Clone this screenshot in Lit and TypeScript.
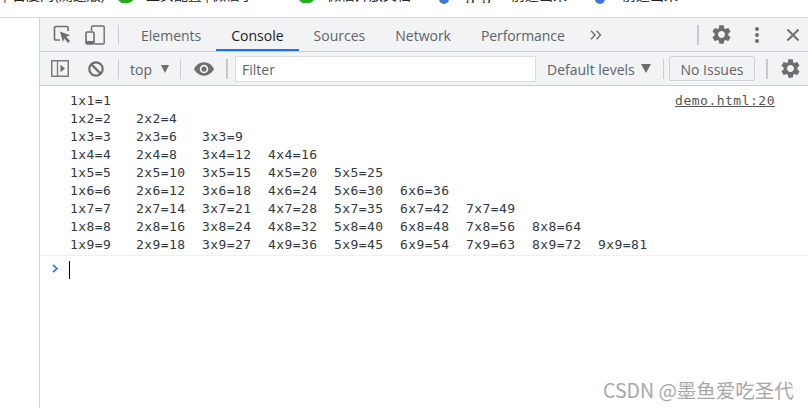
import { LitElement, html, css } from "lit";
import { customElement } from "lit/decorators.js";

const GEAR = "M19.14 12.94c.04-.3.06-.61.06-.94 0-.32-.02-.64-.07-.94l2.03-1.58c.18-.14.23-.41.12-.61l-1.92-3.32c-.12-.22-.37-.29-.59-.22l-2.39.96c-.5-.38-1.03-.7-1.62-.94l-.36-2.54c-.04-.24-.24-.41-.48-.41h-3.84c-.24 0-.43.17-.47.41l-.36 2.54c-.59.24-1.13.57-1.62.94l-2.39-.96c-.22-.08-.47 0-.59.22L2.74 8.87c-.12.21-.08.47.12.61l2.03 1.58c-.05.3-.09.63-.09.94s.02.64.07.94l-2.03 1.58c-.18.14-.23.41-.12.61l1.92 3.32c.12.22.37.29.59.22l2.39-.96c.5.38 1.03.7 1.62.94l.36 2.54c.05.24.24.41.48.41h3.84c.24 0 .44-.17.47-.41l.36-2.54c.59-.24 1.13-.56 1.62-.94l2.39.96c.22.08.47 0 .59-.22l1.92-3.32c.12-.22.07-.47-.12-.61l-2.01-1.58zM12 15.6c-1.98 0-3.6-1.62-3.6-3.6s1.62-3.6 3.6-3.6 3.6 1.62 3.6 3.6-1.62 3.6-3.6 3.6z";

const rows: string[] = [];
for (let j = 1; j <= 9; j++) {
  let r = "";
  for (let i = 1; i <= j; i++) r += `${i}x${j}=${i * j}\t`;
  rows.push(r);
}

const wechat = () => html`<svg class="bm-icon wx" width="15" height="5" viewBox="0 0 15 5"><path fill="#1fae1c" d="M0 -4H15V0.2C13.2 2.2 10.5 3.4 7 3.3C5.5 3.3 4.5 3.2 3.8 3.1L2.5 3.6L3 2C1.6 1.5 0.6 0.9 0 0Z"></path></svg>`;
const globe = () => html`<svg class="bm-icon gl" width="10" height="5" viewBox="0 0 10 5"><circle cx="5" cy="-1" r="5" fill="#3b78d8"></circle></svg>`;

@customElement("app-root")
export class AppRoot extends LitElement {
  static styles = css`
    :host { display: block; width: 808px; height: 408px; overflow: hidden; background: #fff; position: relative; font-family: "Open Sans", "Noto Sans", sans-serif; }
    .page { display: flex; flex-direction: column; height: 408px; }
    .strip { height: 17px; flex: none; overflow: hidden; border-bottom: 1px solid #d8dadc; box-sizing: content-box; }
    .bm { display: flex; align-items: flex-start; height: 6px; font-family: "Noto Sans CJK SC", sans-serif; font-size: 14px; line-height: 18px; color: #222; white-space: nowrap; }
    .bm span { display: block; flex: none; overflow: hidden; height: 18px; margin-top: -15px; }
    .bm-icon { flex: none; }
    .b0 { margin-left: 3px; width: 9px; }
    .b1 { width: 106px; }
    .wx { margin-right: 13px; }
    .gl { margin-right: 17px; }
    .b2 { width: 153px; }
    .b3 { width: 112px; }
    .b4 { width: 45px; }
    .b5 { width: 84px; }
    .b6 { width: 60px; }
    .main { flex: 1; display: flex; min-height: 0; }
    .gutter { width: 39px; flex: none; }
    .dev { flex: 1; min-width: 0; border-left: 1px solid #cfd1d3; display: flex; flex-direction: column; }
    .bar { height: 33px; flex: none; background: #f1f3f4; border-bottom: 1px solid #cacdd1; display: flex; align-items: center; color: #5f6368; }
    .sep { width: 1px; height: 20px; background: #ccced1; flex: none; }
    .sep.wide { width: 2px; background: #c6c8cb; }
    .tabs { display: flex; align-self: stretch; margin-left: 7px; }
    .tab { display: flex; align-items: center; padding: 1px 15px 0; font-size: 14px; box-sizing: border-box; height: 33px; }
    .tab.active { color: #202124; position: relative; }
    .tab.active::after { content: ""; position: absolute; left: 0; right: 0; bottom: 0; height: 2px; background: #1a73e8; }
    .tab.long { letter-spacing: -0.1px; }
    svg { display: block; flex: none; }
    .inspect { margin-left: 13px; }
    .device { margin-left: 14px; margin-right: 13px; }
    .more { margin-left: 10px; }
    .sp { flex: 1; }
    .top-gear { margin-left: 11px; }
    .kebab { margin-left: 22px; }
    .close { margin-left: 28px; margin-right: 9px; }
    .side { margin-left: 11px; }
    .block { margin-left: 19px; margin-right: 14px; }
    .ctx { margin-left: 11px; font-size: 14px; width: 24px; padding-top: 1px; }
    .arrow { margin-left: 7px; }
    .s2 { margin-left: 11px; }
    .eye { margin-left: 13px; }
    .s3 { margin-left: 12px; }
    .filter { margin-left: 7px; width: 301px; height: 26px; box-sizing: border-box; background: #fff; border: 1px solid #dcdee0; font-size: 14px; line-height: 25px; padding-left: 6px; color: #5f6368; flex: none; }
    .levels { margin-left: 11px; font-size: 14px; width: 88px; white-space: nowrap; padding-top: 1px; }
    .l-arrow { margin-left: 6px; }
    .s4 { margin-left: 12px; }
    .issues { margin-left: 5px; width: 86px; height: 25px; box-sizing: border-box; border: 1px solid #d0d2d5; border-radius: 2px; font-size: 14px; display: flex; align-items: center; justify-content: center; padding-top: 1px; }
    .s5 { margin-left: 11px; }
    .t-gear { margin-left: 11px; }
    .console { flex: 1; font-family: "DejaVu Sans Mono", monospace; font-size: 13px; color: #303942; position: relative; min-height: 0; padding-top: 6px; }
    .msgs { padding: 0 33px 0 30px; border-bottom: 1px solid #f0f0f0; height: 163px; position: relative; }
    .row { height: 18px; line-height: 18px; white-space: pre; tab-size: 8; letter-spacing: 0.424px; }
    .link { position: absolute; right: 33px; top: 0; line-height: 18px; color: #555; text-decoration: underline; letter-spacing: 0.5px; }
    .prompt { display: flex; align-items: flex-start; padding: 5px 0 0 12px; }
    .chev { margin-top: 3px; }
    .caret { margin-left: 10px; width: 1px; height: 18px; background: #000; }
    .mark { position: absolute; left: 603px; top: 378px; font-family: "Noto Sans CJK SC", sans-serif; font-size: 19.5px; line-height: 24px; color: #a8a8a8; white-space: nowrap; }
  `;

  render() {
    return html`
      <div class="page">
        <div class="strip">
          <div class="bm">
            <span class="b0">|</span><span class="b1">百度网(测速版)</span>
            ${wechat()}<span class="b2">主页配置 | 微信小...</span>
            ${wechat()}<span class="b3">微信开放文档</span>
            ${globe()}<span class="b4">gogs</span>
            <span class="b5">前途出来</span>
            ${globe()}<span class="b6">前途出来</span>
          </div>
        </div>
        <div class="main">
          <div class="gutter"></div>
          <div class="dev">
            <div class="bar">
              <svg class="inspect" width="18" height="19" viewBox="0 0 18 19" fill="none">
                <path d="M7 15H2.6A1.1 1.1 0 0 1 1.5 13.9V2.6A1.1 1.1 0 0 1 2.6 1.5H13.9A1.1 1.1 0 0 1 15 2.6V6" stroke="#6e6e6e" stroke-width="1.6"></path>
                <path d="M7 6.5L17 10.2L13.2 11.8L17 16L15 18L11.3 13.6L9.8 17Z" fill="#6e6e6e"></path>
              </svg>
              <svg class="device" width="20" height="20" viewBox="0 0 20 20" fill="none">
                <path d="M6.5 6V2.2A1.2 1.2 0 0 1 7.7 1H18A1.2 1.2 0 0 1 19.2 2.2V17.8A1.2 1.2 0 0 1 18 19H9.5" stroke="#6e6e6e" stroke-width="1.4"></path>
                <rect x="1" y="7" width="8" height="12" rx="1.2" stroke="#6e6e6e" stroke-width="1.6"></rect>
                <rect x="1" y="16" width="8" height="3" fill="#6e6e6e"></rect>
              </svg>
              <div class="sep"></div>
              <div class="tabs">
                <div class="tab">Elements</div>
                <div class="tab active">Console</div>
                <div class="tab">Sources</div>
                <div class="tab">Network</div>
                <div class="tab long">Performance</div>
              </div>
              <svg class="more" width="12" height="10" viewBox="0 0 12 10" fill="none" stroke="#6e6e6e" stroke-width="1.4"><path d="M1 0.8L5 5L1 9.2M6.5 0.8L10.5 5L6.5 9.2"></path></svg>
              <div class="sp"></div>
              <div class="sep wide"></div>
              <svg class="top-gear" width="23" height="23" viewBox="0 0 24 24"><path fill="#6e6e6e" d=${GEAR}></path></svg>
              <svg class="kebab" width="4" height="16" viewBox="0 0 4 16" fill="#6e6e6e"><circle cx="2" cy="2" r="2"></circle><circle cx="2" cy="8" r="2"></circle><circle cx="2" cy="14" r="2"></circle></svg>
              <svg class="close" width="12" height="12" viewBox="0 0 12 12" stroke="#6e6e6e" stroke-width="2"><path d="M0.5 0.5L11.5 11.5M11.5 0.5L0.5 11.5"></path></svg>
            </div>
            <div class="bar">
              <svg class="side" width="18" height="17" viewBox="0 0 18 17" fill="none">
                <rect x="0.75" y="0.75" width="16.5" height="15.5" stroke="#7a7a7a" stroke-width="1.5"></rect>
                <path d="M6.5 1V16" stroke="#7a7a7a" stroke-width="1.3"></path>
                <path d="M9.5 4.8L14 8.5L9.5 12.2Z" fill="#6e6e6e"></path>
              </svg>
              <svg class="block" width="16" height="16" viewBox="0 0 16 16" fill="none" stroke="#6e6e6e" stroke-width="2.2"><circle cx="8" cy="8" r="6.7"></circle><path d="M3.4 3.4L12.6 12.6"></path></svg>
              <div class="sep"></div>
              <div class="ctx">top</div>
              <svg class="arrow" width="8" height="8" viewBox="0 0 8 8" fill="#6e6e6e"><path d="M0 0H8L4 8Z"></path></svg>
              <div class="sep s2"></div>
              <svg class="eye" width="20" height="14" viewBox="0 0 21 14"><path fill="#6e6e6e" fill-rule="evenodd" d="M10.5 0C6 0 2.2 2.9 0 7C2.2 11.1 6 14 10.5 14S18.8 11.1 21 7C18.8 2.9 15 0 10.5 0ZM10.5 11.5A4.5 4.5 0 1 1 10.5 2.5A4.5 4.5 0 0 1 10.5 11.5ZM10.5 4.3A2.7 2.7 0 1 0 10.5 9.7A2.7 2.7 0 0 0 10.5 4.3Z"></path></svg>
              <div class="sep wide s3"></div>
              <div class="filter">Filter</div>
              <div class="levels">Default levels</div>
              <svg class="l-arrow" width="10" height="9" viewBox="0 0 10 9" fill="#6e6e6e"><path d="M0 0H10L5 9Z"></path></svg>
              <div class="sep s4"></div>
              <div class="issues">No Issues</div>
              <div class="sep wide s5"></div>
              <svg class="t-gear" width="23" height="23" viewBox="0 0 24 24"><path fill="#6e6e6e" d=${GEAR}></path></svg>
            </div>
            <div class="console">
              <div class="msgs">
                ${rows.map((r) => html`<div class="row">${r}</div>`)}
                <div class="link">demo.html:20</div>
              </div>
              <div class="prompt">
                <svg class="chev" width="7" height="9" viewBox="0 0 7 9" fill="none" stroke="#367cf1" stroke-width="1.8"><path d="M1 0.8L5 4.5L1 8.2"></path></svg>
                <div class="caret"></div>
              </div>
            </div>
          </div>
        </div>
      </div>
      <div class="mark">CSDN @墨鱼爱吃圣代</div>
    `;
  }
}
